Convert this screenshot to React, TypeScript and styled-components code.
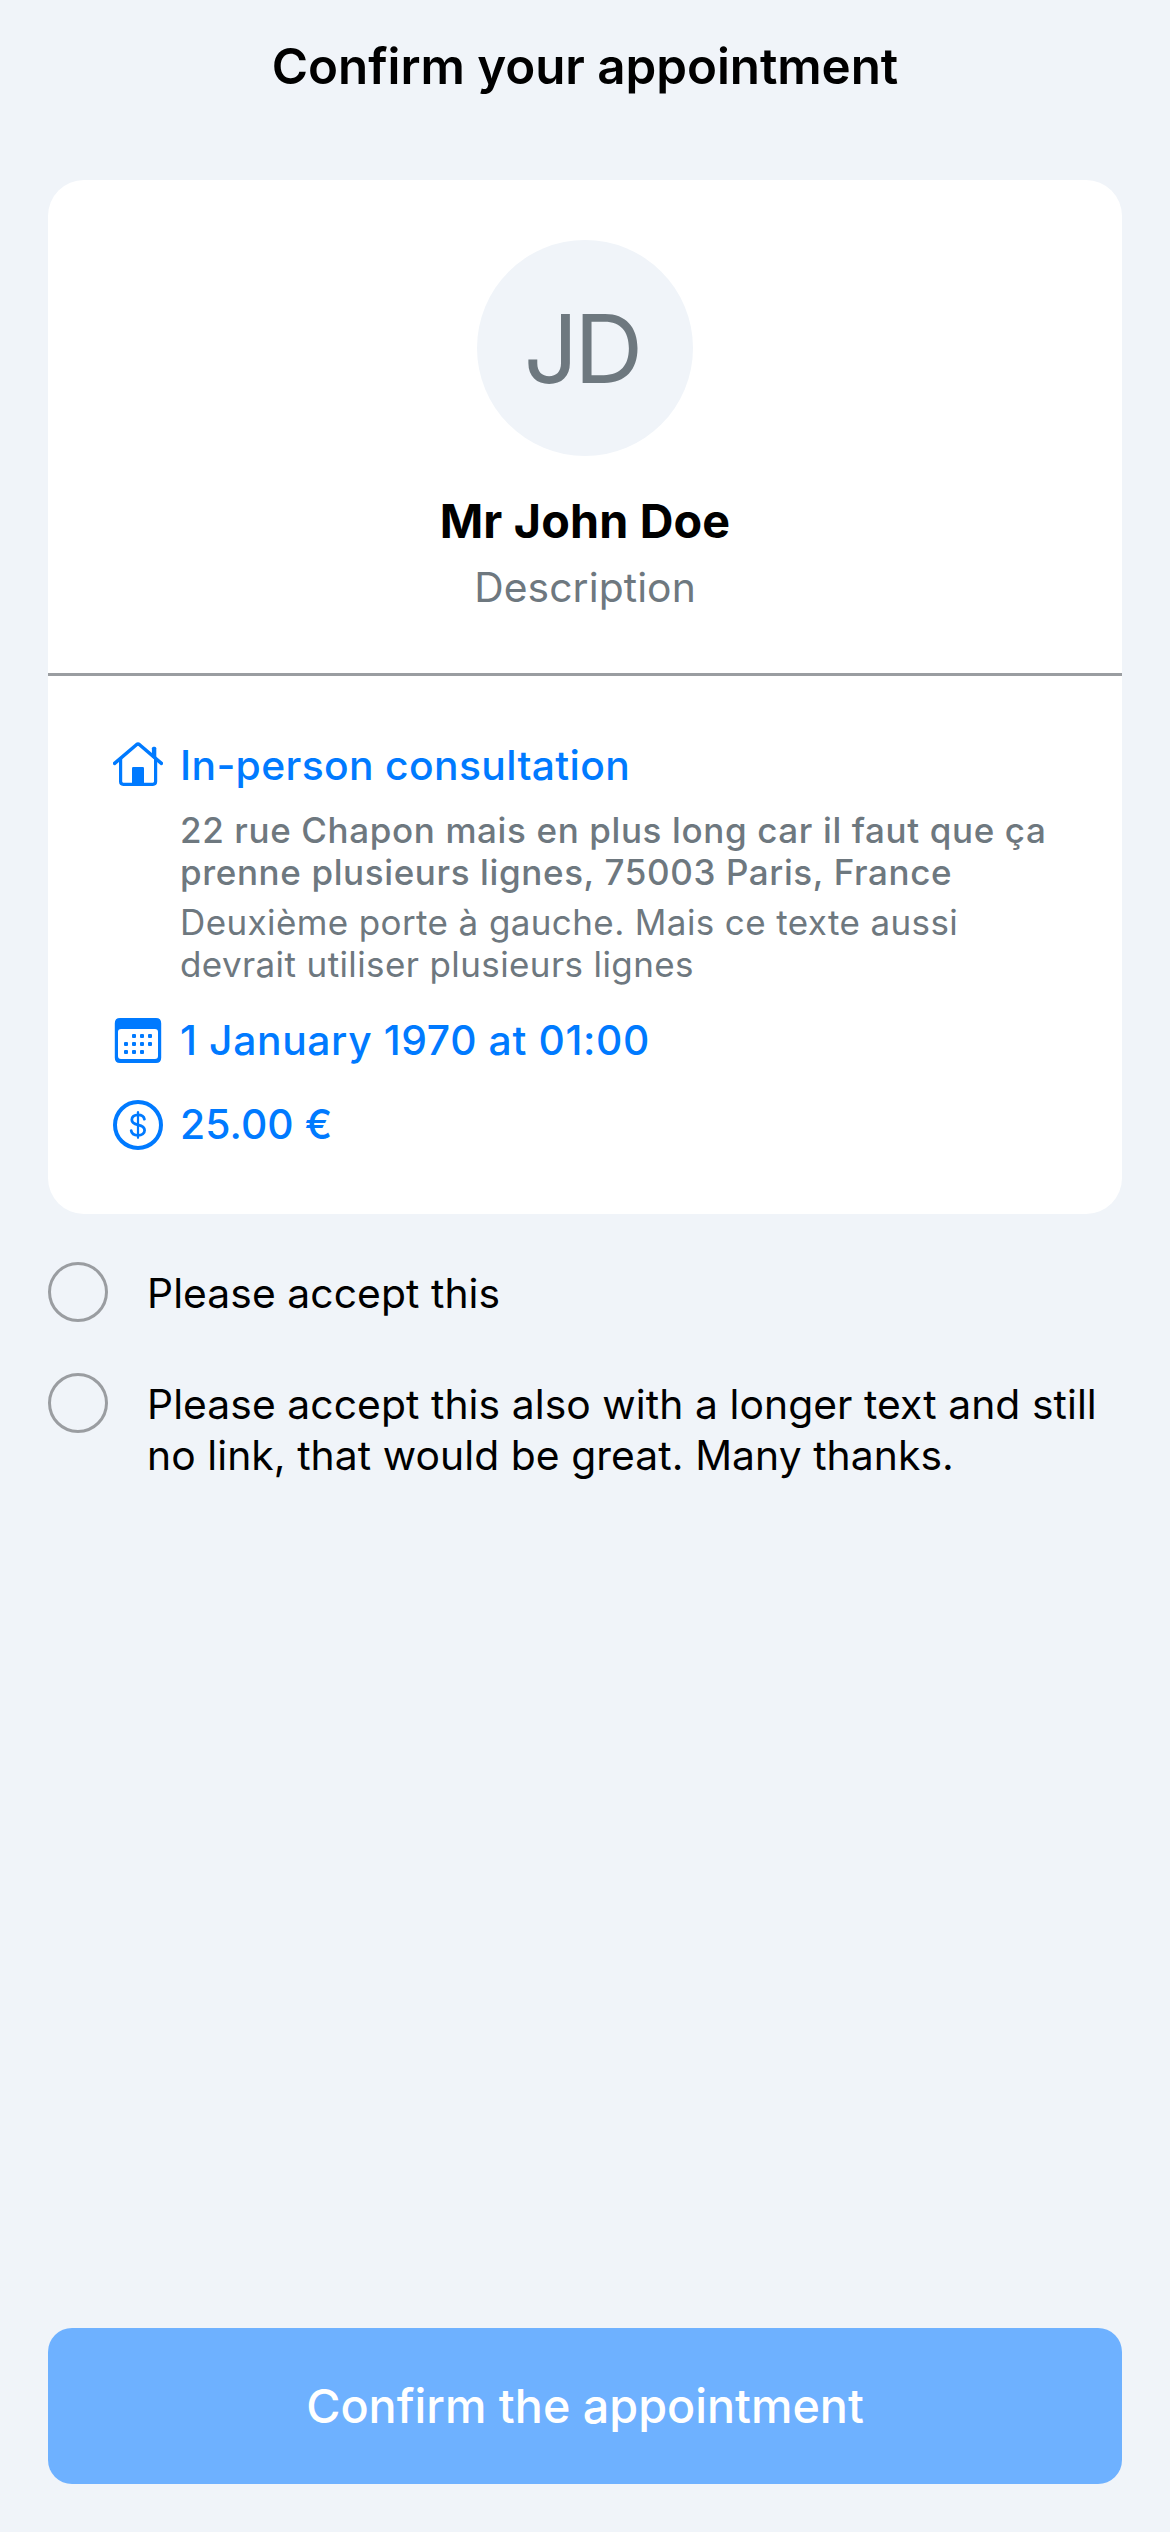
import React, { useState } from "react";
import styled, { createGlobalStyle } from "styled-components";

const color = {
  background: "#f0f4f9",
  surface: "#ffffff",
  text: "#000000",
  muted: "#6e787f",
  line: "#9a9da1",
  primary: "#007aff",
  primaryDisabled: "#6eb1ff",
};

const GlobalStyle = createGlobalStyle`
  *, *::before, *::after {
    box-sizing: border-box;
  }
  body {
    margin: 0;
    background: ${color.background};
    color: ${color.text};
    font-family: Inter, "Liberation Sans", sans-serif;
  }
  h1, h2, p {
    margin: 0;
  }
`;

const Screen = styled.main`
  display: flex;
  flex-direction: column;
  min-height: 2532px;
  padding: 0 48px 48px;
`;

const Header = styled.header`
  height: 180px;
  padding-top: 36px;
  text-align: center;
`;

const Title = styled.h1`
  font-size: 49.3px;
  font-weight: 600;
  line-height: 60px;
  letter-spacing: -0.04px;
`;

const Card = styled.section`
  border-radius: 36px;
  background: ${color.surface};
`;

const Profile = styled.div`
  display: flex;
  flex-direction: column;
  align-items: center;
  padding: 60px 48px;
  border-bottom: 3px solid ${color.line};
`;

const Avatar = styled.div`
  display: flex;
  align-items: center;
  justify-content: center;
  width: 216px;
  height: 216px;
  padding-right: 7px;
  border-radius: 50%;
  background: ${color.background};
  color: ${color.muted};
  font-size: 95.5px;
  line-height: 116px;
  letter-spacing: -4px;
`;

const Name = styled.h2`
  margin-top: 37px;
  font-size: 46.7px;
  font-weight: 700;
  line-height: 57px;
  letter-spacing: 0.16px;
`;

const Description = styled.p`
  margin-top: 12px;
  color: ${color.muted};
  font-size: 40.8px;
  line-height: 51px;
  letter-spacing: 0.09px;
`;

const Details = styled.div`
  padding: 64px 64px 64px 65px;
`;

const DetailRow = styled.div<{ $gap?: number }>`
  display: flex;
  align-items: center;
  gap: 17px;
  margin-top: ${({ $gap = 0 }) => $gap}px;
  color: ${color.primary};
`;

const Icon = styled.svg`
  flex: none;
  width: 50px;
  height: 51px;
`;

const DetailLabel = styled.p<{ $tracking: number }>`
  font-size: 40.8px;
  font-weight: 500;
  line-height: 51px;
  letter-spacing: ${({ $tracking }) => $tracking}px;
`;

const Place = styled.div`
  display: flex;
  flex-direction: column;
  gap: 8px;
  padding: 18px 0 0 67px;
  color: ${color.muted};
  font-size: 35px;
  line-height: 42px;
`;

const Address = styled.p`
  font-weight: 500;
  letter-spacing: 0.62px;
`;

const Directions = styled.p`
  letter-spacing: 0.39px;
`;

const Agreements = styled.div`
  display: flex;
  flex-direction: column;
  gap: 51px;
  padding-top: 48px;
`;

const Agreement = styled.label`
  display: flex;
  align-items: flex-start;
  gap: 39px;
  min-height: 60px;
`;

const Checkbox = styled.input`
  appearance: none;
  flex: none;
  width: 60px;
  height: 60px;
  margin: 0;
  border: 3px solid ${color.line};
  border-radius: 50%;

  &:checked {
    border-color: ${color.primary};
    background: ${color.primary};
  }
`;

const AgreementText = styled.span`
  padding-top: 6px;
  font-size: 40.8px;
  line-height: 51px;
  letter-spacing: 0.075px;
`;

const ConfirmButton = styled.button<{ $ready: boolean }>`
  height: 156px;
  margin-top: auto;
  padding: 0;
  border: 0;
  border-radius: 24px;
  background: ${({ $ready }) => ($ready ? color.primary : color.primaryDisabled)};
  color: #ffffff;
  font-family: inherit;
  font-size: 46.7px;
  font-weight: 500;
  line-height: 57px;
`;

const HomeIcon = () => (
  <Icon viewBox="0 0 50 51" fill="none" stroke="currentColor" strokeWidth="3.2">
    <path d="M38.9 17V8.3Q38.9 6.7 40.5 6.7H41.7Q43.3 6.7 43.3 8.3V21Z" fill="currentColor" stroke="none" />
    <path d="M7.6 18.5V41.6Q7.6 44.3 10.3 44.3H39.9Q42.6 44.3 42.6 41.6V18.5" />
    <path d="M1.6 23.4 23.7 4.5Q25 3.5 26.3 4.5L48.4 23.4" strokeWidth="3.5" strokeLinecap="round" />
    <path d="M19 44V28.2Q19 27 20.2 27H29.8Q31 27 31 28.2V44Z" fill="currentColor" stroke="none" />
  </Icon>
);

const dots = [
  [21, 21], [29, 21], [37, 21],
  [13, 29], [21, 29], [29, 29], [37, 29],
  [13, 37], [21, 37], [29, 37],
];

const CalendarIcon = () => (
  <Icon viewBox="0 0 50 51" fill="currentColor">
    <path
      fillRule="evenodd"
      d="M7 3H43Q48.2 3 48.2 8.2V42.8Q48.2 48 43 48H7Q1.8 48 1.8 42.8V8.2Q1.8 3 7 3ZM8 14Q5 14 5 17V41Q5 44 8 44H42Q45 44 45 41V17Q45 14 42 14Z"
    />
    {dots.map(([x, y]) => (
      <rect key={`${x}-${y}`} x={x - 2} y={y - 2} width="4" height="4" rx="1" />
    ))}
  </Icon>
);

const PriceIcon = () => (
  <Icon viewBox="0 0 50 51" fill="none" stroke="currentColor" strokeLinecap="round">
    <circle cx="25" cy="26" r="23" strokeWidth="4" />
    <path d="M25 13.2V38.8" strokeWidth="2.2" />
    <path
      d="M31.4 20.2C30.9 17.4 28.5 15.8 25 15.8C21.3 15.8 18.8 17.8 18.8 20.7C18.8 23.4 20.7 24.8 25 25.8C29.6 26.8 31.6 28.3 31.6 31.2C31.6 34.3 29 36.3 25 36.3C21.2 36.3 18.6 34.5 18.2 31.6"
      strokeWidth="2.8"
    />
  </Icon>
);

const agreementTexts = [
  "Please accept this",
  "Please accept this also with a longer text and still no link, that would be great. Many thanks.",
];

export default function App() {
  const [accepted, setAccepted] = useState(agreementTexts.map(() => false));
  const ready = accepted.every(Boolean);
  const toggle = (index: number) =>
    setAccepted((current) => current.map((value, i) => (i === index ? !value : value)));

  return (
    <>
      <GlobalStyle />
      <Screen>
        <Header>
          <Title>Confirm your appointment</Title>
        </Header>
        <Card>
          <Profile>
            <Avatar>JD</Avatar>
            <Name>Mr John Doe</Name>
            <Description>Description</Description>
          </Profile>
          <Details>
            <DetailRow>
              <HomeIcon />
              <DetailLabel $tracking={0.36}>In-person consultation</DetailLabel>
            </DetailRow>
            <Place>
              <Address>22 rue Chapon mais en plus long car il faut que ça prenne plusieurs lignes, 75003 Paris, France</Address>
              <Directions>Deuxième porte à gauche. Mais ce texte aussi devrait utiliser plusieurs lignes</Directions>
            </Place>
            <DetailRow $gap={30}>
              <CalendarIcon />
              <DetailLabel $tracking={0.63}>1 January 1970 at 01:00</DetailLabel>
            </DetailRow>
            <DetailRow $gap={33}>
              <PriceIcon />
              <DetailLabel $tracking={0.1}>25.00 €</DetailLabel>
            </DetailRow>
          </Details>
        </Card>
        <Agreements>
          {agreementTexts.map((text, index) => (
            <Agreement key={text}>
              <Checkbox type="checkbox" checked={accepted[index]} onChange={() => toggle(index)} />
              <AgreementText>{text}</AgreementText>
            </Agreement>
          ))}
        </Agreements>
        <ConfirmButton type="button" $ready={ready}>
          Confirm the appointment
        </ConfirmButton>
      </Screen>
    </>
  );
}
